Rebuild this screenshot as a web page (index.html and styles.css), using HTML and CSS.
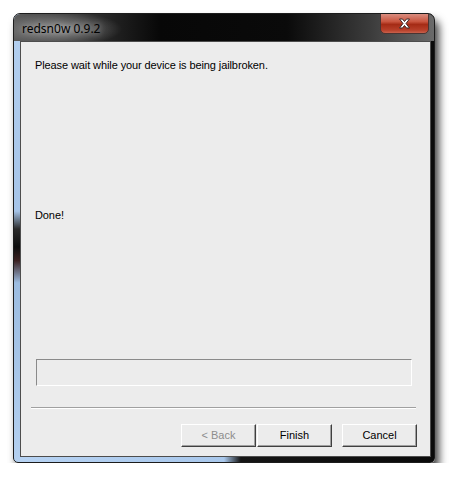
FILE: index.html
```html
<!DOCTYPE html>
<html lang="en">
<head>
    <meta charset="UTF-8">
    <title>redsn0w 0.9.2</title>
    <link rel="stylesheet" href="styles.css">
</head>
<body>

    <!-- Ventana -->
    <div class="ventana">
        <div class="titulo">
            <span class="titulo-texto">redsn0w 0.9.2</span>
            <button class="cerrar" aria-label="Close">
                <svg width="13" height="11" viewBox="0 0 13 11">
                    <path d="M1.5 1 h3 l2 2.5 l2 -2.5 h3 l-3.5 4.5 l3.5 4.5 h-3 l-2 -2.5 l-2 2.5 h-3 l3.5 -4.5 z" fill="#fff" stroke="#3b2b29" stroke-width="1" stroke-linejoin="round"/>
                </svg>
            </button>
        </div>

        <div class="cliente">
            <p class="mensaje">Please wait while your device is being jailbroken.</p>
            <p class="estado">Done!</p>

            <div class="progreso"></div>
            <div class="separador"></div>

            <div class="botones">
                <button class="boton" disabled>&lt; Back</button>
                <button class="boton">Finish</button>
                <button class="boton boton-cancelar">Cancel</button>
            </div>
        </div>
    </div>

</body>
</html>
```

FILE: styles.css
```css
body { margin: 0; background: #fff; font-family: "Liberation Sans", Arial, sans-serif; }

.ventana {
    box-sizing: border-box;
    width: 422px;
    height: 450px;
    margin: 13px 0 0 13px;
    padding: 0 3px 5px 6px;
    border: 1px solid #1c1c1c;
    border-radius: 7px 7px 5px 5px;
    overflow: hidden;
    box-shadow: 4px 7px 9px rgba(0, 0, 0, 0.75);
    background:
        linear-gradient(180deg, #b4d0f0 0%, #a6c4e8 44%, #2a2a2a 48%, #0d0d0d 52%, #3a2020 55%, #9cbce0 60%, #b4d0f0 100%) no-repeat left top / 6px 100%,
        linear-gradient(90deg, #b7d3f3 0%, #a9c8ec 50%, #151515 54%, #0a0a0a 100%);
}

/* Barra de título */
.titulo {
    display: flex;
    align-items: flex-start;
    justify-content: space-between;
    height: 27px;
    margin: 0 -3px 0 -6px;
    padding-left: 8px;
    background:
        radial-gradient(ellipse 60px 17px at 48px 15px, rgba(255, 255, 255, 0.4), rgba(255, 255, 255, 0)),
        linear-gradient(90deg, #5c5c5c 0%, #2e2e2e 18%, #070707 35%, #0a0a0a 65%, #3c3c3c 85%, #6a6a6a 100%);
}
.titulo-texto {
    margin-top: 7px;
    font-family: "Noto Sans", sans-serif;
    font-size: 12px;
    line-height: 15px;
    color: #000;
    text-shadow: 0 0 6px rgba(255, 255, 255, 0.6);
}
.cerrar {
    display: flex;
    align-items: center;
    justify-content: center;
    width: 49px;
    height: 21px;
    margin: -1px 5px 0 0;
    padding: 0;
    border: 1px solid #4a3432;
    border-radius: 0 0 5px 5px;
    background: linear-gradient(180deg, #d98d80 0%, #c9553f 40%, #a52b15 55%, #b7402a 85%, #c9614c 100%);
}

/* Área cliente */
.cliente {
    box-sizing: border-box;
    height: 416px;
    display: flex;
    flex-direction: column;
    border: 1px solid #4d4d4d;
    background: #ececec;
    font-size: 11px;
    line-height: 13px;
    letter-spacing: -0.1px;
    color: #000;
}
.mensaje { margin: 17px 0 0 14px; }
.estado { margin: 137px 0 0 14px; }

.progreso {
    box-sizing: border-box;
    width: 376px;
    height: 27px;
    margin: 137px 0 0 15px;
    border: 1px solid;
    border-color: #8a8a8a #fff #fff #8a8a8a;
}
.separador {
    width: 385px;
    margin: 21px 0 0 10px;
    border-top: 1px solid #a0a0a0;
    border-bottom: 1px solid #fff;
}

.botones { display: flex; justify-content: flex-end; margin-top: 15px; padding-right: 13px; }
.boton {
    box-sizing: border-box;
    width: 75px;
    height: 23px;
    padding: 0 0 1px;
    font-family: "Liberation Sans", Arial, sans-serif;
    font-size: 11px;
    color: #000;
    background: #ececec;
    border: 1px solid;
    border-color: #fff #404040 #404040 #fff;
    box-shadow: inset -1px -1px #a0a0a0;
}
.boton:disabled { color: #8d8d8d; }
.boton + .boton { margin-left: 1px; }
.boton-cancelar { margin-left: 10px !important; }
```
